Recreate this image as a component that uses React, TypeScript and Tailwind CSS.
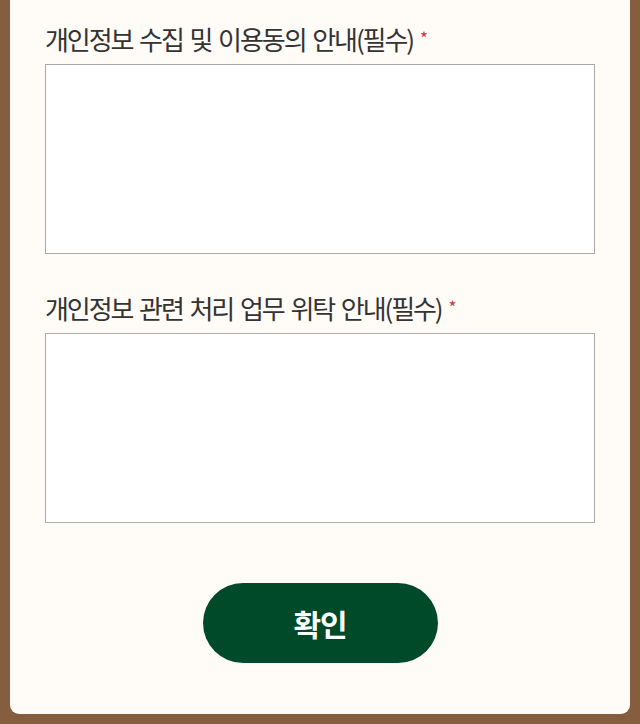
export default function App() {
  const fields = [
    "개인정보 수집 및 이용동의 안내(필수)",
    "개인정보 관련 처리 업무 위탁 안내(필수)",
  ];

  return (
    <div className="h-[724px] w-[640px] overflow-hidden bg-[#855d3f]">
      <div className="h-[714px] mx-[10px] rounded-b-[9px] bg-[#fffbf6] px-[35px] pt-[21px] font-['Noto_Sans_CJK_KR',sans-serif]">
        {fields.map((label) => (
          <div key={label} className="mb-[36px]">
            <label className="flex items-center text-[26px] leading-[36px] tracking-[-0.08em] [word-spacing:3px] text-[#333333]">
              {label}
              <span className="ml-[7px] mt-[-3px] text-[17px] leading-[20px] tracking-normal text-[#c8383b]">*</span>
            </label>
            <textarea className="mt-[7px] block h-[190px] w-[550px] resize-none border border-[#aaaaaa] bg-white outline-none" />
          </div>
        ))}
        <div className="flex justify-center pt-[24px]">
          <button className="h-[80px] w-[235px] rounded-full bg-[#004a29] text-[30px] font-bold tracking-[-0.04em] text-white">
            확인
          </button>
        </div>
      </div>
    </div>
  );
}
